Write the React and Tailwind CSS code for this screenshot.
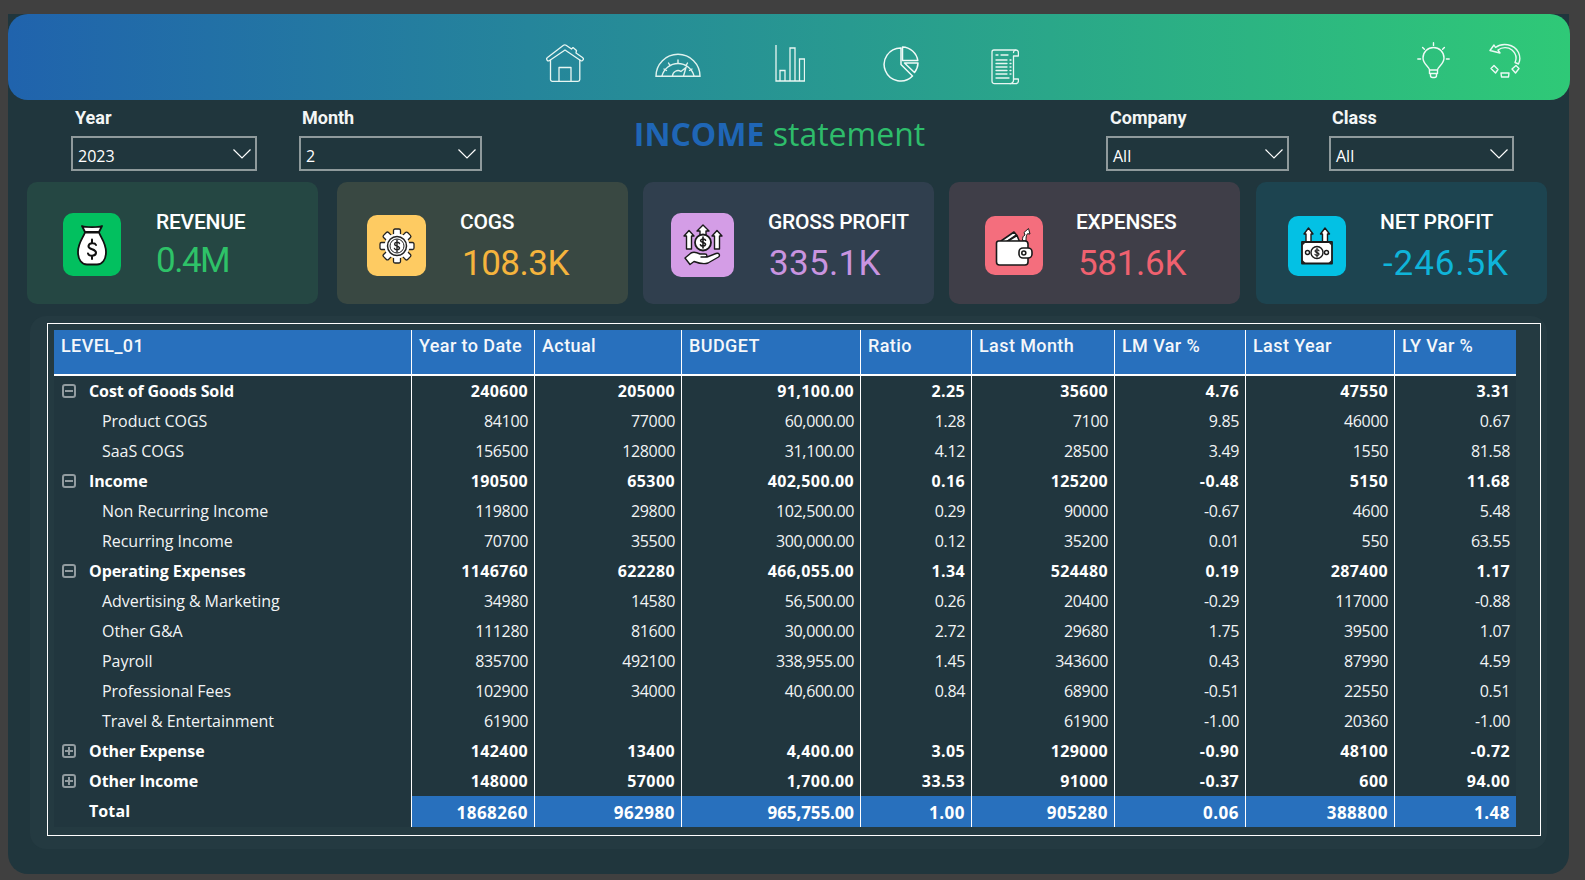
const din = "font-['Roboto',sans-serif]";
const segoe = "font-['Open_Sans',sans-serif]";

const columns = ["Year to Date", "Actual", "BUDGET", "Ratio", "Last Month", "LM Var %", "Last Year", "LY Var %"];
const gridCols = "grid grid-cols-[357px_123px_147px_179px_111px_143px_131px_149px_122px]";

const rows = [
  { name: "Cost of Goods Sold", kind: "open", v: ["240600", "205000", "91,100.00", "2.25", "35600", "4.76", "47550", "3.31"] },
  { name: "Product COGS", v: ["84100", "77000", "60,000.00", "1.28", "7100", "9.85", "46000", "0.67"] },
  { name: "SaaS COGS", v: ["156500", "128000", "31,100.00", "4.12", "28500", "3.49", "1550", "81.58"] },
  { name: "Income", kind: "open", v: ["190500", "65300", "402,500.00", "0.16", "125200", "-0.48", "5150", "11.68"] },
  { name: "Non Recurring Income", v: ["119800", "29800", "102,500.00", "0.29", "90000", "-0.67", "4600", "5.48"] },
  { name: "Recurring Income", v: ["70700", "35500", "300,000.00", "0.12", "35200", "0.01", "550", "63.55"] },
  { name: "Operating Expenses", kind: "open", v: ["1146760", "622280", "466,055.00", "1.34", "524480", "0.19", "287400", "1.17"] },
  { name: "Advertising & Marketing", v: ["34980", "14580", "56,500.00", "0.26", "20400", "-0.29", "117000", "-0.88"] },
  { name: "Other G&A", v: ["111280", "81600", "30,000.00", "2.72", "29680", "1.75", "39500", "1.07"] },
  { name: "Payroll", v: ["835700", "492100", "338,955.00", "1.45", "343600", "0.43", "87990", "4.59"] },
  { name: "Professional Fees", v: ["102900", "34000", "40,600.00", "0.84", "68900", "-0.51", "22550", "0.51"] },
  { name: "Travel & Entertainment", v: ["61900", "", "", "", "61900", "-1.00", "20360", "-1.00"] },
  { name: "Other Expense", kind: "closed", v: ["142400", "13400", "4,400.00", "3.05", "129000", "-0.90", "48100", "-0.72"] },
  { name: "Other Income", kind: "closed", v: ["148000", "57000", "1,700.00", "33.53", "91000", "-0.37", "600", "94.00"] },
];
const totals = ["1868260", "962980", "965,755.00", "1.00", "905280", "0.06", "388800", "1.48"];

function HomeIcon() {
  return (
    <svg viewBox="0 0 38 38" className="w-[38px] h-[38px]" fill="none" stroke="#e8f6f2" strokeWidth="1.3" strokeLinejoin="round">
      <path d="M1.5 13.5 L17.5 1.3 a2.4 2.4 0 0 1 2.6 0 L25.5 5 L27 3.6 L30.5 6.5 L30 9 L36.5 13.5 a1.8 1.8 0 0 1 -2 3 L19 6 L3.6 16.5 a1.8 1.8 0 0 1 -2.1 -3 Z" />
      <path d="M4.5 15.5 V35.5 a1.8 1.8 0 0 0 1.8 1.8 H32 a1.8 1.8 0 0 0 1.8 -1.8 V15.5" />
      <path d="M13 37 V23.5 H25 V37" />
    </svg>
  );
}

function GaugeIcon() {
  return (
    <svg viewBox="0 0 46 24" className="w-[46px] h-[24px]" fill="none" stroke="#dff2ee" strokeWidth="1.4" strokeLinecap="round">
      <path d="M1 23.2 A22 22 0 0 1 45 23.2 Z" />
      <path d="M7 23 A16.5 16.5 0 0 1 39 23" />
      <path d="M23 7 V10 M13.5 10 L15 12.5 M32.5 10 L31 12.5 M9 16 L11.5 17.5 M37 16 L34.5 17.5" />
      <path d="M17.5 23 A5.5 5.5 0 0 1 26 18.5 L31 14.5 L28.5 23" />
    </svg>
  );
}

function BarsIcon() {
  return (
    <svg viewBox="0 0 30 37" className="w-[30px] h-[37px]" fill="none" stroke="#e8f6f2" strokeWidth="1.3">
      <path d="M1 0 V36 H30" />
      <path d="M5 36 V25.5 H10 V36" />
      <path d="M15 36 V3 H20 V36" />
      <path d="M24.5 36 V14 H29.5 V36" />
    </svg>
  );
}

function PieIcon() {
  return (
    <svg viewBox="0 0 36 36" className="w-[36px] h-[36px]" fill="none" stroke="#f0faf7" strokeWidth="1.5" strokeLinejoin="round">
      <path d="M18 2 A16.5 16.5 0 1 0 29.5 30 L18 18.5 Z" />
      <path d="M19.5 1 A16 16 0 0 1 34.8 14.5 H19.5 Z" />
      <path d="M21.5 17 H35 A16 16 0 0 1 31.5 26.5 Z" />
    </svg>
  );
}

function ScrollIcon() {
  return (
    <svg viewBox="0 0 28 36" className="w-[28px] h-[36px]" fill="none" stroke="#e8f6f2" strokeWidth="1.3" strokeLinecap="round" strokeLinejoin="round">
      <path d="M3 1 H25 a2.4 2.4 0 0 1 2.4 2.4 V7 H22.5 V31 a3.4 3.4 0 0 1 -3.4 3.6 H3.5 a2.5 2.5 0 0 1 -2.5 -2.5 V3 a2 2 0 0 1 2 -2 Z" />
      <path d="M22.5 3.5 a2.4 2.4 0 0 1 2 -2.4" />
      <path d="M22.5 30 H27.4 V32 a2.6 2.6 0 0 1 -2.6 2.6 H19" />
      <path d="M5 6 H7 M10 6 H17 M5 11 H16 M19 11 H20 M5 14.5 H16 M19 14.5 H20 M5 18 H16 M19 18 H20 M5 21.5 H16 M19 21.5 H20 M5 25 H16 M19 25 H20 M5 29 H18" />
    </svg>
  );
}

function BulbIcon() {
  return (
    <svg viewBox="0 0 33 37" className="w-[33px] h-[37px]" fill="none" stroke="#f0faf6" strokeWidth="1.4" strokeLinecap="round" strokeLinejoin="round">
      <path d="M16.5 0.8 V3.4 M5.6 5.4 L7.4 7.2 M27.4 5.4 L25.6 7.2 M0.8 17 H3.6 M29.4 17 H32.2" />
      <path d="M12.5 28 C12.5 24.5 6 22.5 6 16 A10.5 10.5 0 0 1 27 16 C27 22.5 20.5 24.5 20.5 28 Z" />
      <path d="M12.5 28 V31.5 H20.5 V28 M13.5 31.5 V33.5 a2 2 0 0 0 2 2 H17.5 a2 2 0 0 0 2 -2 V31.5" />
    </svg>
  );
}

function RestoreIcon() {
  return (
    <svg viewBox="0 0 32 35" className="w-[32px] h-[35px]" fill="none" stroke="#ecf9f4" strokeWidth="1.4" strokeLinejoin="round">
      <path d="M1 7.5 L5 2 L6.5 4.5 C13 -0.5 25 0.5 29.5 9.5 C31.5 14 31 18 29.5 21 L26 19.5 C28 15 27 10.5 23 7 C19 3.8 13 4 9 7 L11 10 Z" />
      <path d="M2 25.5 L5 22.5 L9 26.5 L6.5 30 Z" />
      <path d="M12 30 L20 30 L19.5 34 L12.5 34 Z" />
      <path d="M23 26 L27 22.5 L30 25.5 L26.5 30 Z" />
    </svg>
  );
}

function BagIcon() {
  return (
    <svg viewBox="0 0 30 42" className="w-[30px] h-[42px]" stroke="#111" strokeWidth="1.8" strokeLinejoin="round">
      <path fill="#fff" d="M5 2 C9 3.5 21 3.5 25 2 L22 8 H8 Z" />
      <path fill="#fff" d="M8 8.5 H22 C24 14 29 19 29 28 C29 36 25 40.5 20 40.5 H10 C5 40.5 1 36 1 28 C1 19 6 14 8 8.5 Z" />
      <path fill="none" strokeWidth="2" strokeLinecap="round" d="M19 21 C18 18.5 12 18.5 11.5 22 C11 26 19.5 24.5 19 29 C18.5 32.5 12 32.5 11 29.5 M15 15.5 V18.5 M15 32 V35" />
    </svg>
  );
}

function GearIcon() {
  const teeth = [0, 45, 90, 135, 180, 225, 270, 315];
  return (
    <svg viewBox="0 0 36 36" className="w-[36px] h-[36px]" stroke="#222" strokeWidth="1.3" strokeLinejoin="round">
      {teeth.map((a) => (
        <rect key={a} x="14.5" y="1" width="7" height="8" rx="1.5" fill="#fff" transform={`rotate(${a} 18 18)`} />
      ))}
      <circle cx="18" cy="18" r="12.5" fill="#fff" stroke="none" />
      <circle cx="18" cy="18" r="9.5" fill="#fff" strokeWidth="1.5" />
      <circle cx="18" cy="18" r="7" fill="#fff" strokeWidth="1" />
      <path fill="none" strokeWidth="1.4" strokeLinecap="round" d="M20.5 15.5 C20 13.8 15.8 13.8 15.6 16 C15.4 18.6 20.8 17.6 20.5 20.2 C20.2 22.4 16 22.3 15.4 20.4 M18 12 V24" />
    </svg>
  );
}

function HandCoinIcon() {
  return (
    <svg viewBox="0 0 40 42" className="w-[40px] h-[42px]" stroke="#1a1a1a" strokeWidth="1.4" strokeLinejoin="round">
      <path fill="#fff" d="M20 1 L26 7 H23 V11 H17 V7 H14 Z" />
      <path fill="#fff" d="M6 6.5 L11 12 H8.5 V25 H3.5 V12 H1 Z" />
      <path fill="#fff" d="M34 6.5 L39 12 H36.5 V25 H31.5 V12 H29 Z" />
      <circle cx="20" cy="18.5" r="8" fill="#fff" strokeWidth="1.8" />
      <path fill="none" strokeWidth="1.6" strokeLinecap="round" d="M22.5 16.2 C22 14.6 17.8 14.6 17.6 16.6 C17.4 19 22.8 18 22.5 20.6 C22.2 22.6 18 22.6 17.4 20.8 M20 13 V24" />
      <path fill="#fff" d="M2 34 L8 29 C11 27.5 14 28.5 17 30 H22 C24.5 30 24.5 33 22 33 H18 L24 33 L33 29.5 C36 28.5 37.5 31 35.5 33 L25 39 C21 40.5 15 39 11 37.5 L7 40.5 Z" />
    </svg>
  );
}

function WalletIcon() {
  return (
    <svg viewBox="0 0 38 40" className="w-[38px] h-[40px]" stroke="#1a1a1a" strokeWidth="1.6" strokeLinejoin="round">
      <path fill="#fff" d="M6 15 L19 6 L21.5 9 L10 17 Z" />
      <path fill="#fff" d="M12 15.5 L22 9.5 L24.5 15.5 Z" />
      <path fill="#fff" d="M27.5 14.5 C27.5 11 28 10 30 9 L29 6.5 L33.5 2.5 L35 8 L32.5 7.7 C31 9.5 31 12 31 15 Z" strokeWidth="1" />
      <path fill="#fff" d="M3.5 15 H30 a3 3 0 0 1 3 3 V36 a3 3 0 0 1 -3 3 H4.5 a3 3 0 0 1 -3 -3 V17 a2 2 0 0 1 2 -2 Z" />
      <rect x="24" y="22" width="13" height="10" rx="4" fill="#fff" />
      <circle cx="28.8" cy="27" r="2" fill="#fff" />
    </svg>
  );
}

function CashIcon() {
  return (
    <svg viewBox="0 0 32 38" className="w-[32px] h-[38px]" stroke="#1a1a1a" strokeWidth="1.4" strokeLinejoin="round">
      <path fill="#fff" d="M7.5 1 L12 7 H10 V15 H5 V7 H3 Z" />
      <path fill="#fff" d="M24 1 L28.5 7 H26.5 V15 H21.5 V7 H19.5 Z" />
      <path fill="#fff" d="M1 15 H31 V36.5 H1 Z" strokeWidth="1.8" />
      <path fill="#222" stroke="none" d="M1 15 H5 L1 19 Z M31 15 H27 L31 19 Z M1 36.5 H5 L1 32.5 Z M31 36.5 H27 L31 32.5 Z" />
      <circle cx="16" cy="25.5" r="6" fill="#fff" />
      <circle cx="6.5" cy="25.5" r="2" fill="#fff" />
      <circle cx="25.5" cy="25.5" r="2" fill="#fff" />
      <path fill="none" strokeWidth="1.2" strokeLinecap="round" d="M18 23.8 C17.6 22.4 14.2 22.4 14 24 C13.8 26 18.2 25.2 18 27.2 C17.8 28.8 14.4 28.8 14 27.4 M16 21 V30" />
    </svg>
  );
}

const cards = [
  { title: "REVENUE", value: "0.4M", bg: "bg-[#254743]", iconBg: "bg-[#02c05f]", color: "text-[#2ec268]", cardMl: "ml-[19px]", pad: "pl-[36px]", box: "w-[58px] h-[63px] mt-[31px]", gap: "ml-[35px]", vm: "mt-[7px] ml-[0px] tracking-[-1.5px]", Icon: BagIcon },
  { title: "COGS", value: "108.3K", bg: "bg-[#394842]", iconBg: "bg-[#fecb62]", color: "text-[#f5b43d]", cardMl: "ml-[19px]", pad: "pl-[30px]", box: "w-[59px] h-[61px] mt-[33px]", gap: "ml-[34px]", vm: "mt-[10px] ml-[2px] tracking-[-0.5px]", Icon: GearIcon },
  { title: "GROSS PROFIT", value: "335.1K", bg: "bg-[#303f4e]", iconBg: "bg-[#d49de6]", color: "text-[#c994e0]", cardMl: "ml-[15px]", pad: "pl-[28px]", box: "w-[63px] h-[64px] mt-[31px]", gap: "ml-[34px]", vm: "mt-[10px] ml-[1px] tracking-[0.3px]", Icon: HandCoinIcon },
  { title: "EXPENSES", value: "581.6K", bg: "bg-[#3f3e48]", iconBg: "bg-[#f46e7d]", color: "text-[#f0616f]", cardMl: "ml-[15px]", pad: "pl-[36px]", box: "w-[58px] h-[59px] mt-[34px]", gap: "ml-[33px]", vm: "mt-[10px] ml-[2px] tracking-[-0.3px]", Icon: WalletIcon },
  { title: "NET PROFIT", value: "-246.5K", bg: "bg-[#1d4450]", iconBg: "bg-[#03c1e4]", color: "text-[#0fb4d9]", cardMl: "ml-[16px]", pad: "pl-[32px]", box: "w-[58px] h-[60px] mt-[34px]", gap: "ml-[34px]", vm: "mt-[10px] ml-[3px] tracking-[0.9px]", Icon: CashIcon },
];

function Slicer({ label, value, className, labelPad }) {
  return (
    <div className={className}>
      <div className={`${din} ${labelPad} h-[36px] pt-[6px] text-[18px] leading-[24px] font-bold text-[#f4f6f6]`}>{label}</div>
      <div className={`${segoe} h-[35px] border-2 border-[#8f9a9c] flex items-center justify-between pl-[5px] pr-[4px] text-[16px] text-white`}>
        <span className="mt-[5px]">{value}</span>
        <svg viewBox="0 0 18 10" className="w-[18px] h-[10px] mt-[1px]" fill="none" stroke="#fff" strokeWidth="1.2">
          <path d="M0.5 0.5 L9 9 L17.5 0.5" />
        </svg>
      </div>
    </div>
  );
}

function KpiCard({ c }) {
  const Icon = c.Icon;
  return (
    <div className={`${c.cardMl} ${c.pad} ${c.bg} w-[291px] h-[122px] rounded-[10px] flex items-start`}>
      <div className={`${c.box} ${c.iconBg} rounded-[10px] flex items-center justify-center shrink-0`}>
        <Icon />
      </div>
      <div className={`${c.gap} ${din} pt-[28px]`}>
        <div className="text-[21px] leading-[24px] font-medium tracking-[-0.25px] text-white whitespace-nowrap">{c.title}</div>
        <div className={`${c.vm} ${c.color} text-[35px] leading-[40px] whitespace-nowrap`}>{c.value}</div>
      </div>
    </div>
  );
}

function ExpandBox({ open }) {
  return (
    <span className="w-[14px] h-[14px] rounded-[3px] border-2 border-[#929ca0] relative shrink-0 block">
      <span className="absolute left-[1px] right-[1px] top-[4px] h-[2px] bg-[#929ca0]" />
      {!open && <span className="absolute top-[1px] bottom-[1px] left-[4px] w-[2px] bg-[#929ca0]" />}
    </span>
  );
}

function TableRow({ row }) {
  const group = !!row.kind;
  return (
    <div className={`${gridCols} h-[30px] text-[16px] ${group ? "font-bold" : "font-normal text-[#f2f4f5]"}`}>
      <div className="flex items-center whitespace-nowrap">
        {group ? (
          <>
            <span className="ml-[8px] mr-[13px] block"><ExpandBox open={row.kind === "open"} /></span>
            <span className="tracking-[-0.1px]">{row.name}</span>
          </>
        ) : (
          <span className="ml-[48px] tracking-[-0.05px]">{row.name}</span>
        )}
      </div>
      {row.v.map((val, i) => (
        <div key={i} className={`border-l border-white flex items-center justify-end pr-[6px] ${group ? "tracking-[0.4px]" : "tracking-[-0.35px]"}`}>{val}</div>
      ))}
    </div>
  );
}

export default function App() {
  return (
    <div className="w-[1585px] h-[880px] bg-[#404040] pt-[14px] pl-[8px] overflow-hidden">
      <div className="w-[1561px] h-[860px] bg-[#20363d] rounded-b-[20px]">
        {/* top nav */}
        <div className="w-[1562px] h-[86px] rounded-[20px] bg-linear-to-r/srgb from-[#2063ad] to-[#2fc977] flex items-start">
          <div className="ml-[538px] mt-[30px]"><HomeIcon /></div>
          <div className="ml-[71px] mt-[39px]"><GaugeIcon /></div>
          <div className="ml-[74px] mt-[31px]"><BarsIcon /></div>
          <div className="ml-[78px] mt-[32px]"><PieIcon /></div>
          <div className="ml-[72px] mt-[35px]"><ScrollIcon /></div>
          <div className="ml-[398px] mt-[28px]"><BulbIcon /></div>
          <div className="ml-[39px] mt-[29px]"><RestoreIcon /></div>
        </div>

        {/* filters + title */}
        <div className="h-[82px] flex items-start">
          <Slicer label="Year" value="2023" className="ml-[63px] w-[186px]" labelPad="pl-[4px]" />
          <Slicer label="Month" value="2" className="ml-[42px] w-[183px]" labelPad="pl-[3px]" />
          <div className={`${segoe} w-[624px] text-center pr-[29px] pt-[10px] text-[32px] leading-[48px] whitespace-nowrap`}>
            <span className="font-bold text-[#1f66b6]">INCOME</span>
            <span className="text-[#2ebd6b]"> statement</span>
          </div>
          <Slicer label="Company" value="All" className="w-[183px]" labelPad="pl-[4px]" />
          <Slicer label="Class" value="All" className="ml-[40px] w-[185px]" labelPad="pl-[3px]" />
        </div>

        {/* kpi cards */}
        <div className="flex">
          {cards.map((c) => <KpiCard key={c.title} c={c} />)}
        </div>

        {/* matrix */}
        <div className="ml-[22px] mt-[12px] w-[1517px] h-[533px] bg-[#243a41] rounded-[16px] pl-[17px] pt-[7px]">
          <div className="w-[1494px] h-[513px] border border-white p-[6px] pb-0">
            <div className="w-[1462px] bg-[#21363e] text-white">
              <div className={`${gridCols} ${din} h-[46px] bg-[#2870bd] border-b-2 border-white text-[18px] font-medium leading-[24px] tracking-[0.4px] text-[#f4f7fa]`}>
                <div className="pl-[7px] pt-[4px]">LEVEL_01</div>
                {columns.map((col) => (
                  <div key={col} className="border-l border-white pl-[7px] pt-[4px] whitespace-nowrap">{col}</div>
                ))}
              </div>
              <div className={segoe}>
                {rows.map((r) => <TableRow key={r.name} row={r} />)}
                <div className={`${gridCols} h-[31px] font-bold`}>
                  <div className="text-[16px] tracking-[0.1px] pl-[35px] leading-[30px]">Total</div>
                  {totals.map((val, i) => (
                    <div key={i} className={`bg-[#2870bd] border-l border-white flex items-center justify-end pr-[6px] pt-[2px] text-[17px] ${i === 2 ? "tracking-[-0.1px]" : "tracking-[0.5px]"}`}>{val}</div>
                  ))}
                </div>
              </div>
            </div>
          </div>
        </div>
      </div>
    </div>
  );
}
